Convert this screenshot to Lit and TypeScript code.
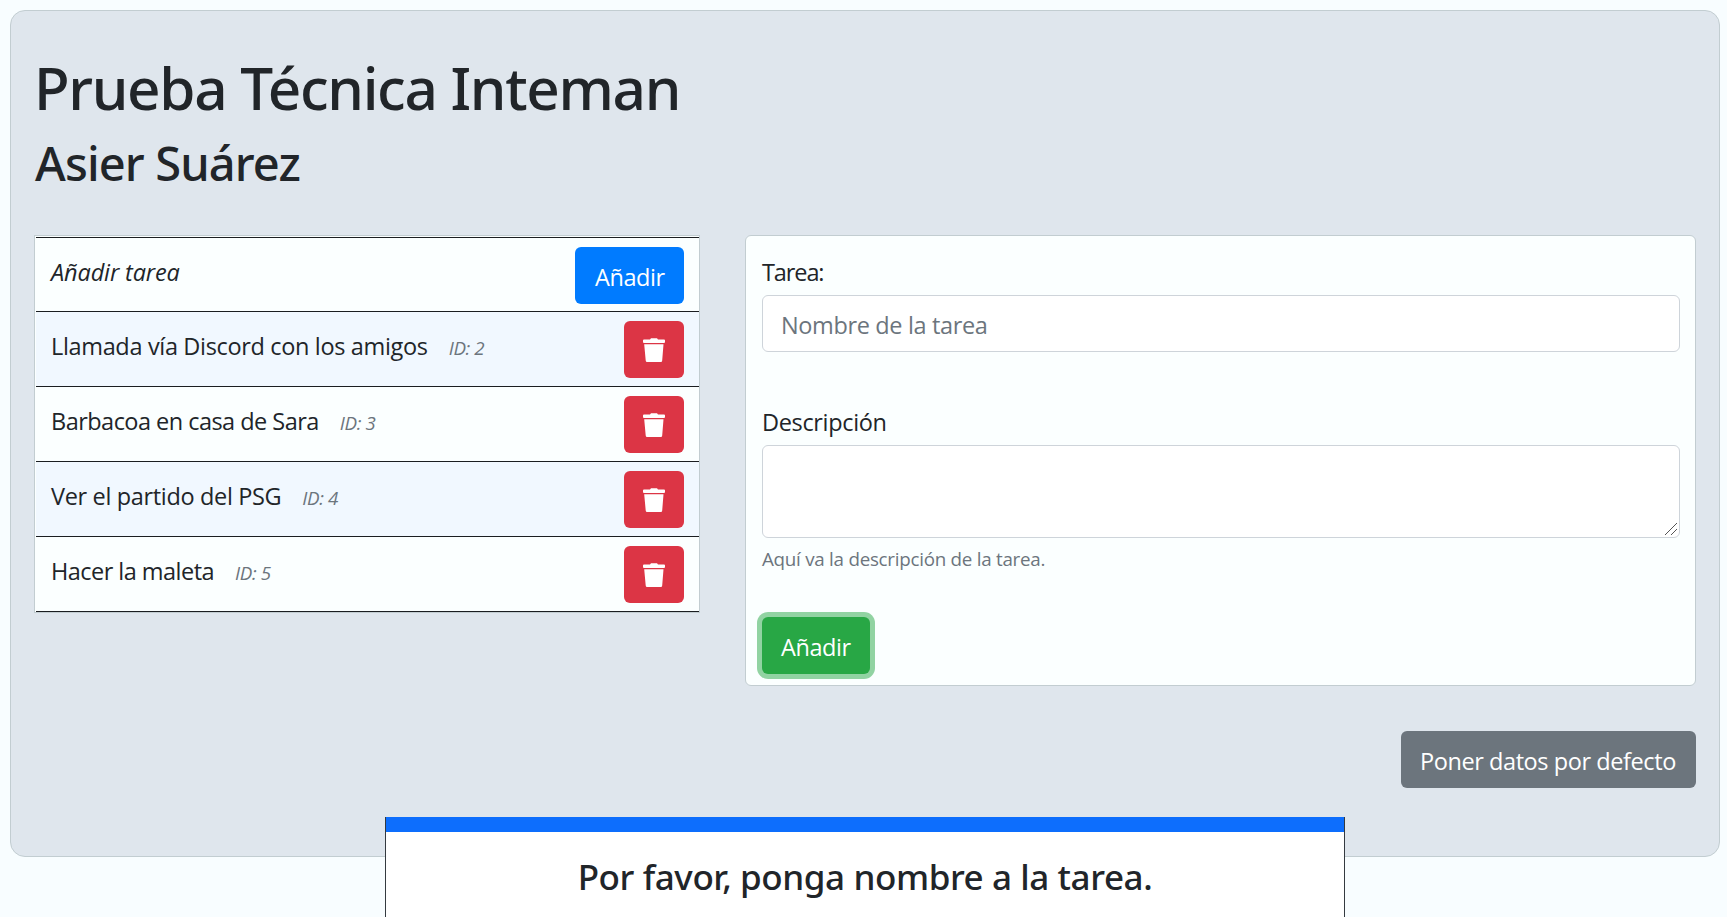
import { LitElement, html, css } from 'lit';
import { customElement, state } from 'lit/decorators.js';

interface Task {
  id: number;
  name: string;
  tight?: boolean;
}

@customElement('app-root')
export class AppRoot extends LitElement {
  @state() private tasks: Task[] = [
    { id: 2, name: 'Llamada vía Discord con los amigos' },
    { id: 3, name: 'Barbacoa en casa de Sara', tight: true },
    { id: 4, name: 'Ver el partido del PSG' },
    { id: 5, name: 'Hacer la maleta', tight: true },
  ];

  static styles = css`
    :host {
      display: block;
      position: relative;
      box-sizing: border-box;
      height: 917px;
      padding: 10px 7px 0 10px;
      overflow: hidden;
      background: #f8fdff;
      color: #212529;
      font: 400 23.5px/36px 'Open Sans', 'Noto Sans', sans-serif;
      letter-spacing: -0.34px;
    }
    * {
      box-sizing: border-box;
    }
    h1,
    h2,
    p {
      margin: 0;
    }
    .panel {
      height: 847px;
      padding: 40px 23px 0;
      border: 1px solid #c2cdd1;
      border-radius: 15px;
      background: #dfe6ed;
    }
    .title,
    .author,
    .message {
      font-family: 'Noto Sans', sans-serif;
      font-weight: 500;
    }
    .title {
      font-size: 58.5px;
      line-height: 72px;
      letter-spacing: -1.34px;
    }
    .author {
      margin: 11px 0 43px;
      padding-left: 1px;
      font-size: 47px;
      line-height: 58px;
      letter-spacing: -0.87px;
    }
    .columns {
      display: grid;
      grid-template-columns: 666px 1fr;
      gap: 45px;
      align-items: start;
    }
    .list {
      padding: 1px 0 0 1px;
      border: 1px solid #c2cdd1;
      background: #fbffff;
    }
    .row {
      display: flex;
      align-items: flex-start;
      height: 75px;
      padding: 9px 15px 0 15px;
      border-bottom: 1px solid #1b1e21;
    }
    .row.first {
      border-top: 1px solid #1b1e21;
    }
    .row.alt {
      background: #f1f8ff;
    }
    .name {
      flex: 1;
      padding-top: 7px;
    }
    .tight {
      letter-spacing: -0.53px;
    }
    .hint {
      font-style: italic;
      letter-spacing: -0.12px;
    }
    .id {
      margin-left: 21px;
      color: #6c757d;
      font-size: 18.8px;
      font-style: italic;
      letter-spacing: -0.4px;
    }
    .btn {
      display: block;
      height: 57px;
      padding: 3px 0 0 19px;
      border: 0;
      border-radius: 6px;
      color: #fff;
      font: inherit;
      line-height: 54px;
      letter-spacing: -0.42px;
      text-align: left;
      white-space: nowrap;
    }
    .primary {
      width: 109px;
      padding-left: 20px;
      background: #007bff;
    }
    .danger {
      width: 60px;
      padding: 17px 19px 16px;
      background: #dc3545;
    }
    .icon {
      display: block;
      width: 22px;
      height: 24px;
      fill: #fff;
    }
    .success {
      width: 108px;
      background: #28a745;
      box-shadow: 0 0 0 5px rgba(40, 167, 69, 0.5);
    }
    .secondary {
      width: 295px;
      background: #6c757d;
    }
    .form {
      display: flex;
      flex-direction: column;
      align-items: flex-start;
      height: 451px;
      padding: 18px 15px 0 16px;
      border: 1px solid #c2cdd1;
      border-radius: 6px;
      background: #fbffff;
    }
    .short {
      letter-spacing: -1.1px;
    }
    .control {
      display: block;
      width: 100%;
      margin: 5px 0 0;
      border: 1px solid #ced4da;
      border-radius: 6px;
      background: #fff;
      font: inherit;
      letter-spacing: -0.36px;
      outline: 0;
    }
    .control::placeholder {
      color: #6c757d;
      opacity: 1;
    }
    .text {
      height: 57px;
      margin-bottom: 52px;
      padding: 3px 18px 0;
    }
    .field {
      position: relative;
      width: 100%;
    }
    .area {
      height: 93px;
      padding: 9px 18px;
      resize: none;
    }
    .grip {
      position: absolute;
      right: 3px;
      bottom: 3px;
      width: 12px;
      height: 12px;
      stroke: #555;
      stroke-width: 1;
      pointer-events: none;
    }
    .help {
      margin: 7px 0 44px;
      color: #6c757d;
      font-size: 18.8px;
      line-height: 28px;
      letter-spacing: -0.26px;
    }
    .actions {
      display: flex;
      justify-content: flex-end;
      margin-top: 45px;
    }
    .dialog {
      position: absolute;
      top: 817px;
      left: 385px;
      width: 960px;
      height: 100px;
      border: solid #343a40;
      border-width: 0 1px;
      background: #fff;
      text-align: center;
    }
    .bar {
      height: 15px;
      background: #0d6efd;
    }
    .message {
      padding-top: 19px;
      font-size: 35px;
      line-height: 52px;
      letter-spacing: -0.41px;
    }
  `;

  private remove(id: number) {
    this.tasks = this.tasks.filter((t) => t.id !== id);
  }

  private trash() {
    return html`<svg class="icon" viewBox="0 0 22 24">
      <path d="M1 1.5h6L8 .3h6l1 1.200h6a1 1 0 0 1 1 1v1.500a1 1 0 0 1-1 1H1a1 1 0 0 1-1-1V2.500a1 1 0 0 1 1-1z" />
      <path d="M1.200 6.200h19.300l-1.300 16.300a1.500 1.500 0 0 1-1.500 1.500H4.200a1.500 1.500 0 0 1-1.500-1.500z" />
    </svg>`;
  }

  render() {
    return html`
      <main class="panel">
        <h1 class="title">Prueba Técnica Inteman</h1>
        <h2 class="author">Asier Suárez</h2>
        <div class="columns">
          <section class="list">
            <div class="row first">
              <span class="name hint">Añadir tarea</span>
              <button class="btn primary">Añadir</button>
            </div>
            ${this.tasks.map(
              (t, i) => html`<div class="row ${i % 2 ? '' : 'alt'}">
                <span class="name ${t.tight ? 'tight' : ''}">${t.name}<span class="id">ID: ${t.id}</span></span>
                <button class="btn danger" aria-label="Borrar" @click=${() => this.remove(t.id)}>${this.trash()}</button>
              </div>`
            )}
          </section>
          <section class="form">
            <label class="short" for="task">Tarea:</label>
            <input id="task" class="control text" placeholder="Nombre de la tarea" />
            <label for="desc">Descripción</label>
            <div class="field">
              <textarea id="desc" class="control area"></textarea>
              <svg class="grip" viewBox="0 0 12 12"><path d="M0 12L12 0M6 12L12 6" /></svg>
            </div>
            <p class="help">Aquí va la descripción de la tarea.</p>
            <button class="btn success">Añadir</button>
          </section>
        </div>
        <div class="actions">
          <button class="btn secondary">Poner datos por defecto</button>
        </div>
      </main>
      <div class="dialog" role="dialog">
        <div class="bar"></div>
        <p class="message">Por favor, ponga nombre a la tarea.</p>
      </div>
    `;
  }
}
